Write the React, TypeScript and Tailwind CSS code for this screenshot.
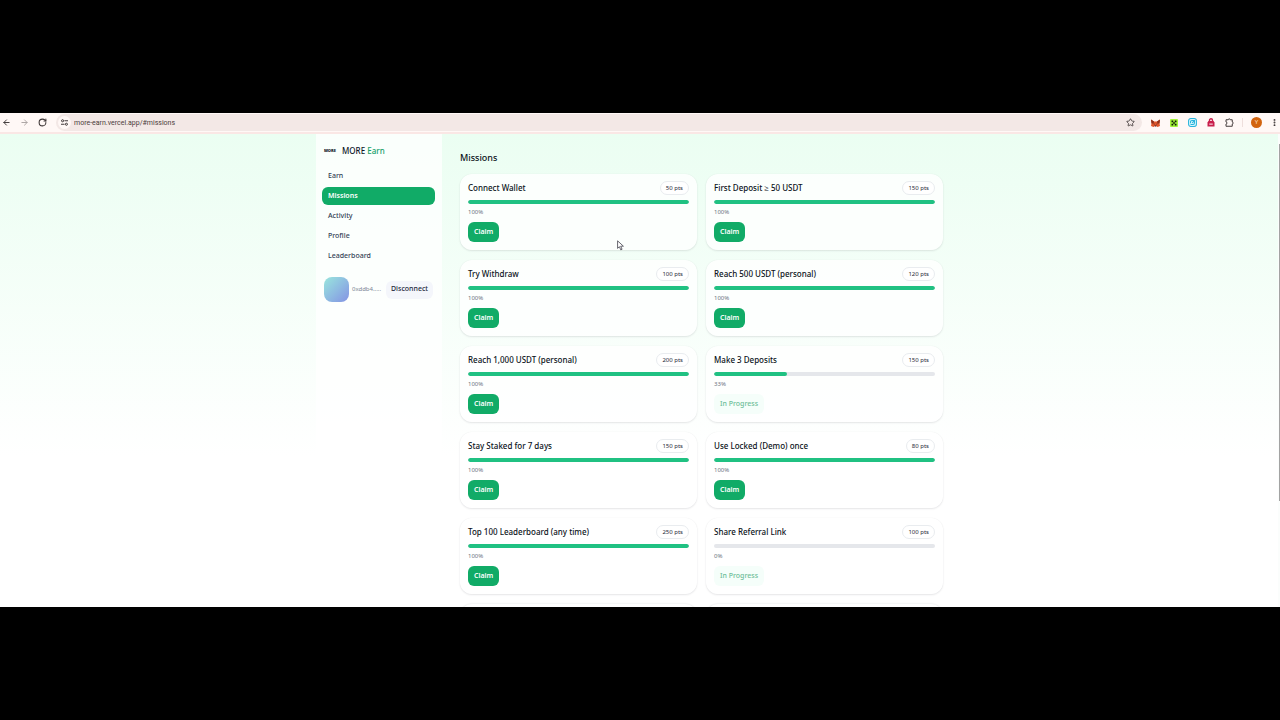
import React from "react";
import { ArrowLeft, ArrowRight, RotateCw, Star, MoreVertical } from "lucide-react";

type Mission = { title: string; points: number; progress: number };

const missions: Mission[] = [
  { title: "Connect Wallet", points: 50, progress: 100 },
  { title: "First Deposit ≥ 50 USDT", points: 150, progress: 100 },
  { title: "Try Withdraw", points: 100, progress: 100 },
  { title: "Reach 500 USDT (personal)", points: 120, progress: 100 },
  { title: "Reach 1,000 USDT (personal)", points: 200, progress: 100 },
  { title: "Make 3 Deposits", points: 150, progress: 33 },
  { title: "Stay Staked for 7 days", points: 150, progress: 100 },
  { title: "Use Locked (Demo) once", points: 80, progress: 100 },
  { title: "Top 100 Leaderboard (any time)", points: 250, progress: 100 },
  { title: "Share Referral Link", points: 100, progress: 0 },
];

const navItems = ["Earn", "Missions", "Activity", "Profile", "Leaderboard"];

function SiteSettingsIcon() {
  return (
    <svg viewBox="0 0 8 8" className="size-[7px]" fill="none" stroke="#3b3434" strokeWidth="1.1">
      <circle cx="1.8" cy="2" r="1.2" />
      <path d="M4 2h4M0 6h4" />
      <circle cx="6.2" cy="6" r="1.2" />
    </svg>
  );
}

function FoxIcon() {
  return (
    <svg viewBox="0 0 18 16" className="h-2 w-[9px]">
      <path d="M0 1l6 4h6l6-4-1 8 1 5-5 2-3-2H8l-3 2-5-2 1-5z" fill="#e2562a" />
      <path d="M0 1l6 4-1 4-4 0zM18 1l-6 4 1 4 4 0z" fill="#8c2f1b" />
      <path d="M5 9l3 1-2 1zM13 9l-3 1 2 1zM7 13h4l-1 2H8z" fill="#2a1d2e" />
    </svg>
  );
}

function CrossIcon() {
  return (
    <svg viewBox="0 0 16 16" className="size-2">
      <rect width="16" height="16" rx="2" fill="#a4f63a" />
      <path d="M3 3h3.500v3.500H3zM9.500 3H13v3.500H9.500zM6.300 6.300h3.400v3.400H6.300zM3 9.500h3.500V13H3zM9.500 9.500H13V13H9.500z" fill="#101a08" />
    </svg>
  );
}

function SwirlIcon() {
  return (
    <svg viewBox="0 0 16 16" className="size-[9px]" fill="none" stroke="#27b4dc" strokeWidth="1.8">
      <rect x="1" y="1" width="14" height="14" rx="4" fill="#d5f5fd" />
      <path d="M4.500 9.500V7a2.500 2.500 0 0 1 2.500-2.500h4.500V9A2.500 2.500 0 0 1 9 11.500H4.500M11.500 4.500l-4 4" />
    </svg>
  );
}

function LockBagIcon() {
  return (
    <svg viewBox="0 0 16 18" className="h-[9px] w-2">
      <path d="M5 8V4.500a3 3 0 0 1 6 0V8" fill="none" stroke="#c81e4b" strokeWidth="2.800" />
      <path d="M3 6h10l2 3v8H1V9z" fill="#c81e4b" />
      <path d="M4.500 11h7v2.500h-7z" fill="#f6c9d4" />
    </svg>
  );
}

function PuzzleIcon() {
  return (
    <svg viewBox="0 0 18 18" className="size-[9px]" fill="none" stroke="#453e3e" strokeWidth="2" strokeLinejoin="round">
      <path d="M2 3.500h4.500a2 1.800 0 0 1 4 0H14.500v4.500a1.800 2 0 0 1 0 4V16.500H2v-4.500a2 2 0 0 0 0-4z" />
    </svg>
  );
}

function BrowserBar() {
  return (
    <header className="flex h-[21px] shrink-0 items-center border-b-2 border-[#fae7e5] bg-[#fff8f6] pl-[2px] text-[#3b3434]">
      <div className="flex w-[54px] items-center gap-[9px]">
        <button aria-label="Back"><ArrowLeft className="size-[9px]" strokeWidth={2.5} /></button>
        <button aria-label="Forward" className="text-[#aaa2a1]"><ArrowRight className="size-[9px]" strokeWidth={2.5} /></button>
        <button aria-label="Reload"><RotateCw className="size-[9px]" strokeWidth={2.8} /></button>
      </div>
      <div className="flex h-[17px] flex-1 items-center rounded-full bg-[#f3e8e6] pl-[2px] pr-[7px]">
        <button aria-label="Site information" className="flex size-[13px] items-center justify-center rounded-full bg-[#fff8f6]">
          <SiteSettingsIcon />
        </button>
        <input
          aria-label="Address"
          readOnly
          value="more-earn.vercel.app/#missions"
          className="h-3 min-w-0 flex-1 bg-transparent pl-[3px] font-[Roboto,sans-serif] text-[7px] leading-3 text-[#4b3d3b] outline-none"
        />
        <button aria-label="Bookmark"><Star className="size-[9px]" strokeWidth={2.2} /></button>
      </div>
      <div className="flex items-center gap-[10px] pl-[9px]">
        <button aria-label="Wallet extension"><FoxIcon /></button>
        <button aria-label="Exchange extension"><CrossIcon /></button>
        <button aria-label="Swap extension"><SwirlIcon /></button>
        <button aria-label="Security extension"><LockBagIcon /></button>
        <button aria-label="Extensions"><PuzzleIcon /></button>
      </div>
      <span className="ml-2 h-[9px] w-px bg-[#eedfdc]" />
      <button aria-label="Account" className="ml-2 flex size-[11px] items-center justify-center rounded-full bg-[#d2640f] text-[6px] text-[#ffe3c8]">
        Y
      </button>
      <button aria-label="Menu" className="ml-2 pr-px"><MoreVertical className="size-[9px]" strokeWidth={3} /></button>
    </header>
  );
}

function Sidebar() {
  return (
    <aside className="w-[126px] shrink-0 bg-white/75 pt-[11px] pr-[7px] pl-[6px]">
      <div className="flex h-3 items-center gap-[5px] pl-[2px]">
        <span className="w-[13px] text-[4px] leading-3 font-black text-[#111827]">MORE</span>
        <span className="text-[8px] leading-3 font-medium text-[#0f172a]">
          MORE <span className="text-[#16a06a]">Earn</span>
        </span>
      </div>
      <nav className="mt-[10px] flex flex-col gap-[2px]">
        {navItems.map((item) => (
          <a
            key={item}
            href={"#" + item.toLowerCase()}
            className={
              item === "Missions"
                ? "flex h-[18px] items-center rounded-md bg-[#11ab67] px-[6px] text-[7px] font-semibold text-white"
                : "flex h-[18px] items-center rounded-md px-[6px] text-[7px] font-medium text-[#334155]"
            }
          >
            {item}
          </a>
        ))}
      </nav>
      <div className="mt-3 flex items-center pl-[2px]">
        <span className="size-[25px] shrink-0 rounded-lg bg-linear-to-br from-[#99e6dc] to-[#8492e3]" />
        <span className="ml-[3px] w-[34px] text-[6px] text-[#7b8494]">0xddb4.....</span>
        <button className="h-[18px] rounded-md bg-[#f4f6fb] px-[5px] text-[7px] font-medium text-[#1e293b]">
          Disconnect
        </button>
      </div>
    </aside>
  );
}

function MissionCard({ title, points, progress }: Mission) {
  const done = progress === 100;
  return (
    <article className="rounded-xl bg-white/80 px-2 pt-[7px] pb-2 shadow-[0_1px_2px_rgba(15,23,42,0.1),0_0_1px_rgba(15,23,42,0.1)]">
      <div className="flex h-[14px] items-center justify-between">
        <h2 className="text-[8px] leading-[14px] font-medium text-[#0b1220]">{title}</h2>
        <span className="rounded-full border border-[#e9ecef] bg-white px-[5px] text-[6px] leading-3 text-[#1f2937]">
          {points} pts
        </span>
      </div>
      <div
        role="progressbar"
        aria-label={title}
        aria-valuenow={progress}
        aria-valuemin={0}
        aria-valuemax={100}
        className="mt-[5px] h-1 overflow-hidden rounded-full bg-[#e5e7eb]"
      >
        <div className="h-full rounded-full bg-[#20c182]" style={{ width: progress + "%" }} />
      </div>
      <p className="mt-1 text-[6px] leading-[9px] text-[#6b7280]">{progress}%</p>
      <button
        disabled={!done}
        className={
          done
            ? "mt-[5px] block h-5 rounded-md bg-[#11ab67] px-[6px] text-[7px] font-semibold text-white"
            : "mt-[5px] block h-5 rounded-md bg-[#f5fefa] px-[6px] text-[7px] font-medium text-[#6dbd98]"
        }
      >
        {done ? "Claim" : "In Progress"}
      </button>
    </article>
  );
}

export default function App() {
  return (
    <div className="flex h-screen flex-col bg-black py-[113px] font-['Noto_Sans','Open_Sans',sans-serif]">
      <div className="relative flex min-h-0 flex-1 flex-col overflow-hidden bg-white">
        <BrowserBar />
        <div className="flex min-h-0 flex-1 bg-linear-to-b from-[#ebfef2] to-white to-68%">
          <div className="min-w-0 flex-1 overflow-hidden">
            <div className="mx-auto flex min-h-full max-w-[646px]">
              <Sidebar />
              <main className="min-w-0 flex-1 pt-[18px] pr-[19px] pl-[18px]">
                <h1 className="text-[9px] leading-3 font-medium text-[#0b1220]">Missions</h1>
                <div className="mt-[10px] grid grid-cols-2 gap-x-[9px] gap-y-[10px]">
                  {missions.map((mission) => (
                    <MissionCard key={mission.title} {...mission} />
                  ))}
                  <div className="h-[76px] rounded-xl bg-white/80 shadow-[0_0_2px_rgba(15,23,42,0.16)]" />
                  <div className="h-[76px] rounded-xl bg-white/80 shadow-[0_0_2px_rgba(15,23,42,0.16)]" />
                </div>
              </main>
            </div>
          </div>
          <div className="flex w-[2px] flex-col items-end bg-[#fbfdfc] pt-[10px]">
            <div className="h-[77%] w-px bg-[#a3a3a3]" />
          </div>
        </div>
        <svg viewBox="0 0 12 18" className="absolute top-[127px] left-[617px] h-[11px] w-[7px]" fill="#fff" stroke="#52525b" strokeWidth="1.5" strokeLinejoin="round">
          <path d="M1 1v13l3-3 2.500 5.500 2.200-1L6.300 10.200H11z" />
        </svg>
      </div>
    </div>
  );
}
